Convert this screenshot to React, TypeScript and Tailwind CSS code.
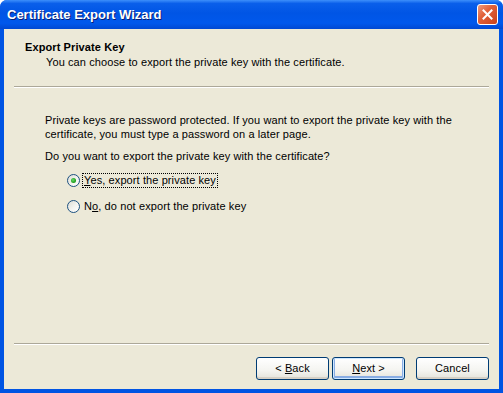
import React, { useState } from 'react';

const XpButton: React.FC<{ children: React.ReactNode; isDefault?: boolean }> = ({ children, isDefault }) => (
  <button
    type="button"
    className={`w-[73px] h-[23px] rounded-[3px] border border-[#003C74] bg-[linear-gradient(to_bottom,#FFFFFF_0%,#F4F4F0_60%,#E3E2DA_100%)] text-black text-[11px] leading-none flex items-center justify-center ${
      isDefault ? 'shadow-[inset_0_0_0_1px_#CEE7FF,inset_0_-1px_0_2px_#89ADE4]' : 'shadow-[inset_0_-2px_0_0_#D6D0C5]'
    }`}
  >
    <span className="whitespace-pre">{children}</span>
  </button>
);

const Radio: React.FC<{ checked: boolean; onClick: () => void; children: React.ReactNode; focused?: boolean }> = ({
  checked,
  onClick,
  children,
  focused,
}) => (
  <div className="flex items-center h-[13px] cursor-default" onClick={onClick}>
    <span className="w-[13px] h-[13px] rounded-full border border-[#1C5180] bg-[linear-gradient(135deg,#DCDCD5_0%,#F4F4F0_55%,#FFFFFF_100%)] flex items-center justify-center">
      {checked && (
        <span className="w-[5px] h-[5px] rounded-full bg-[radial-gradient(circle_at_40%_40%,#6ADB6A_0%,#21A121_60%,#1A8C1A_100%)]" />
      )}
    </span>
    <span
      className={`ml-[2px] px-[1px] leading-[13px] border border-dotted ${focused ? 'border-black' : 'border-transparent'}`}
    >
      {children}
    </span>
  </div>
);

export default function App() {
  const [exportKey, setExportKey] = useState(true);

  return (
    <div className="w-[503px] h-[393px] flex flex-col rounded-t-[7px] overflow-hidden bg-[#0054E3] text-[11px] tracking-[0.1px] text-black font-['Liberation_Sans',Arial,sans-serif]">
      {/* title bar */}
      <div className="h-[29px] shrink-0 flex items-center justify-between pl-[7px] pr-[5px] bg-[linear-gradient(to_bottom,#3D8FFB_0%,#0A5FEA_12%,#0055E5_45%,#0058EC_80%,#0048D2_100%)]">
        <span className="text-white font-bold text-[13px] tracking-normal [text-shadow:1px_1px_0_#0A1E72] pt-[1px]">
          Certificate Export Wizard
        </span>
        <button
          type="button"
          className="w-[21px] h-[21px] rounded-[3px] border border-white bg-[linear-gradient(135deg,#EE9B7E_0%,#E1613A_40%,#C9411B_100%)] flex items-center justify-center"
        >
          <svg width="11" height="11" viewBox="0 0 11 11">
            <path d="M1.5 1.5 L9.5 9.5 M9.5 1.5 L1.5 9.5" stroke="#FFFFFF" strokeWidth="2" strokeLinecap="square" />
          </svg>
        </button>
      </div>

      {/* body */}
      <div className="flex-1 mx-[4px] mb-[4px] bg-[#ECE9D8] flex flex-col">
        <div className="h-[57px] shrink-0 pl-[21px] pt-[11px]">
          <div className="font-bold leading-[14px]">Export Private Key</div>
          <div className="pl-[21px] leading-[14px] mt-[1px]">You can choose to export the private key with the certificate.</div>
        </div>
        <div className="mx-[10px] border-t border-t-[#ACA899] border-b border-b-white" />

        <div className="flex-1 pl-[41px] pr-[20px] pt-[25px]">
          <p className="leading-[14px]">
            Private keys are password protected. If you want to export the private key with the
            <br />
            certificate, you must type a password on a later page.
          </p>
          <p className="leading-[13px] mt-[9px]">Do you want to export the private key with the certificate?</p>
          <div className="pl-[22px] mt-[11px] flex flex-col gap-[13px]">
            <Radio checked={exportKey} focused onClick={() => setExportKey(true)}>
              <span className="underline">Y</span>es, export the private key
            </Radio>
            <Radio checked={!exportKey} onClick={() => setExportKey(false)}>
              N<span className="underline">o</span>, do not export the private key
            </Radio>
          </div>
        </div>

        <div className="mx-[10px] border-t border-t-[#ACA899] border-b border-b-white" />
        <div className="shrink-0 flex justify-end items-center pr-[10px] pt-[12px] pb-[9px]">
          <XpButton>
            {'< '}
            <span className="underline">B</span>ack
          </XpButton>
          <div className="ml-[3px]">
            <XpButton isDefault>
              <span className="underline">N</span>
              {'ext >'}
            </XpButton>
          </div>
          <div className="ml-[11px]">
            <XpButton>Cancel</XpButton>
          </div>
        </div>
      </div>
    </div>
  );
}
